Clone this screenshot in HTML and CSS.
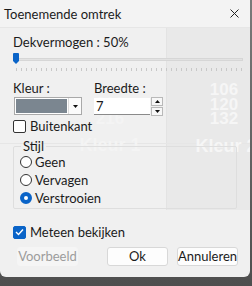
FILE: index.html
```html
<!DOCTYPE html>
<html lang="nl">
<head>
    <meta charset="UTF-8">
    <title>Toenemende omtrek</title>
    <link rel="stylesheet" href="styles.css">
</head>
<body>
    <div class="dialog">
        <!-- faded picture behind the dialog -->
        <div class="ghost">
            <div class="ghost-panel"></div>
            <div class="ghost-hline"></div>
            <div class="ghost-col one"><span>210</span><span>216</span><b>Kleur 1</b></div>
            <div class="ghost-col two"><span>106</span><span>120</span><span>132</span><b>Kleur 2</b></div>
        </div>

        <div class="titlebar">
            <span class="title">Toenemende omtrek</span>
            <svg class="close" width="9" height="9" viewBox="0 0 9 9">
                <path d="M0.5 0.5L8.5 8.5M8.5 0.5L0.5 8.5" stroke="#222" stroke-width="1"/>
            </svg>
        </div>

        <div class="body">
            <div class="label">Dekvermogen : 50%</div>
            <div class="slider">
                <div class="track"></div>
                <svg class="thumb" width="6" height="11" viewBox="0 0 6 11">
                    <path d="M1 0H5Q6 0 6 1V8L3 11L0 8V1Q0 0 1 0Z" fill="#0a64c8"/>
                </svg>
                <div class="ticks"></div>
            </div>

            <div class="row">
                <div class="field">
                    <div class="label">Kleur :</div>
                    <div class="colorbox">
                        <div class="swatch"></div>
                        <div class="drop">
                            <svg width="5" height="3" viewBox="0 0 5 3"><path d="M0 0H5L2.5 3Z" fill="#111"/></svg>
                        </div>
                    </div>
                </div>
                <div class="field">
                    <div class="label">Breedte :</div>
                    <div class="spinbox">
                        <div class="spin-input">7</div>
                        <div class="spin-btns">
                            <div class="spin-btn"><svg width="5" height="3" viewBox="0 0 5 3"><path d="M0 3H5L2.5 0Z" fill="#111"/></svg></div>
                            <div class="spin-btn"><svg width="5" height="3" viewBox="0 0 5 3"><path d="M0 0H5L2.5 3Z" fill="#111"/></svg></div>
                        </div>
                    </div>
                </div>
            </div>

            <div class="check">
                <span class="box"></span>
                <span>Buitenkant</span>
            </div>

            <fieldset class="group">
                <legend>Stijl</legend>
                <div class="radio"><span class="circle"></span><span>Geen</span></div>
                <div class="radio"><span class="circle"></span><span>Vervagen</span></div>
                <div class="radio"><span class="circle on"></span><span>Verstrooien</span></div>
            </fieldset>

            <div class="check live">
                <span class="box checked">
                    <svg width="9" height="8" viewBox="0 0 9 8"><path d="M1 4L3.5 6.5L8 1.5" stroke="#fff" stroke-width="1.4" fill="none"/></svg>
                </span>
                <span>Meteen bekijken</span>
            </div>

            <div class="buttons">
                <div class="btn disabled">Voorbeeld</div>
                <div class="spacer"></div>
                <div class="btn">Ok</div>
                <div class="btn">Annuleren</div>
            </div>
        </div>
    </div>
</body>
</html>
```

FILE: styles.css
```css
/* Page */
body {
    margin: 0;
    width: 252px;
    height: 286px;
    overflow: hidden;
    background: linear-gradient(#7a7a7a, #4e4e4e);
    font-family: Lato, "Noto Sans", sans-serif;
    font-size: 13px;
    color: #1b1b1b;
}
.dialog {
    position: relative;
    width: 250px;
    height: 277px;
    background: #f0f0f0;
    border-radius: 0 0 6px 6px;
    overflow: hidden;
}

/* Faded picture behind */
.ghost {
    position: absolute;
    inset: 0;
    pointer-events: none;
}
.ghost-panel {
    position: absolute;
    left: 166px;
    top: 28px;
    width: 84px;
    height: 182px;
    background: #e9e9e9;
    border-left: 1px solid #e3e3e3;
}
.ghost-hline {
    position: absolute;
    left: 0;
    top: 143px;
    width: 250px;
    height: 1px;
    background: #e6e6e6;
}
.ghost-col {
    position: absolute;
    display: flex;
    flex-direction: column;
    align-items: center;
    color: #f6f6f6;
    font-family: "Liberation Sans", sans-serif;
    font-weight: bold;
    font-size: 17px;
    line-height: 14.5px;
}
.ghost-col b {
    margin-top: 11px;
    font-size: 18px;
    line-height: 16px;
    white-space: nowrap;
}
.ghost-col.one {
    left: 80px;
    top: 97px;
    width: 60px;
    color: #f4f4f4;
}
.ghost-col.two {
    left: 194px;
    top: 83px;
    width: 60px;
}
.ghost-col.two b {
    margin-left: 4px;
}

/* Title bar */
.titlebar {
    position: relative;
    height: 27px;
    display: flex;
    align-items: center;
    justify-content: space-between;
    padding: 0 11px 0 4px;
    background: #f3f3f3;
    border-bottom: 1px solid #e6e6e6;
}

/* Body */
.body {
    position: relative;
    padding: 6px 0 0 13px;
}
.label {
    line-height: 16px;
}
.slider {
    position: relative;
    width: 230px;
    height: 22px;
    margin-top: 2px;
}
.track {
    position: absolute;
    left: 0;
    top: 6px;
    width: 230px;
    height: 3px;
    background: #e2e2e2;
    border: 1px solid #d6d6d6;
    box-sizing: border-box;
}
.thumb {
    position: absolute;
    left: 0;
    top: 1px;
}
.ticks {
    position: absolute;
    left: 3px;
    top: 16px;
    width: 226px;
    height: 3px;
    background: repeating-linear-gradient(90deg, #c8c8c8 0 1px, transparent 1px 5px);
}

.row {
    display: flex;
    gap: 12px;
    margin-top: 6px;
}
.field .label {
    margin-bottom: 1px;
}
.colorbox {
    display: flex;
    width: 66px;
    height: 16px;
    margin-left: 1px;
    border: 1px solid #a9a9a9;
    background: #fff;
}
.swatch {
    flex: 1;
    margin: 1px;
    background: #7b8690;
}
.drop {
    width: 12px;
    display: flex;
    align-items: center;
    justify-content: center;
    background: #fbfbfb;
    border-left: 1px solid #dcdcdc;
}
.spinbox {
    display: flex;
    align-items: center;
    gap: 1px;
}
.spin-input {
    width: 56px;
    height: 17px;
    padding-left: 2px;
    line-height: 16px;
    background: #fff;
    border-bottom: 1px solid #8a8a8a;
    box-sizing: border-box;
}
.spin-btns {
    display: flex;
    flex-direction: column;
    gap: 1px;
}
.spin-btn {
    width: 10px;
    height: 7px;
    display: flex;
    align-items: center;
    justify-content: center;
    background: #f7f7f7;
    border: 1px solid #b9b9b9;
}

/* Checkboxes */
.check {
    display: flex;
    align-items: center;
    gap: 4px;
    margin-top: 2px;
    line-height: 16px;
}
.box {
    width: 11px;
    height: 11px;
    border: 1px solid #333;
    border-radius: 2px;
    background: #fff;
    display: flex;
    align-items: center;
    justify-content: center;
}
.box.checked {
    background: #0a64c8;
    border-color: #0a64c8;
}

/* Group box */
.group {
    width: 216px;
    margin: 6px 0 0 0;
    padding: 0 0 1px 6px;
    border: 1px solid #dedede;
    border-radius: 2px;
}
.group legend {
    padding: 0 2px;
    margin-left: 1px;
    line-height: 13px;
}
.radio {
    display: flex;
    align-items: center;
    gap: 3px;
    height: 18px;
}
.circle {
    width: 10px;
    height: 10px;
    border: 1px solid #333;
    border-radius: 50%;
    background: #fff;
    box-sizing: content-box;
}
.circle.on {
    width: 4px;
    height: 4px;
    border: 4px solid #0a64c8;
}

.check.live {
    margin-top: 15px;
}

/* Buttons */
.buttons {
    display: flex;
    gap: 9px;
    margin: 7px 0 0 4px;
    width: 221px;
}
.spacer {
    flex: 1;
}
.btn {
    width: 59px;
    height: 17px;
    line-height: 17px;
    text-align: center;
    background: #fdfdfd;
    border: 1px solid #d8d8d8;
    border-radius: 3px;
}
.btn.disabled {
    color: #9c9c9c;
    background: #f5f5f5;
    border-color: #f5f5f5;
}
```
